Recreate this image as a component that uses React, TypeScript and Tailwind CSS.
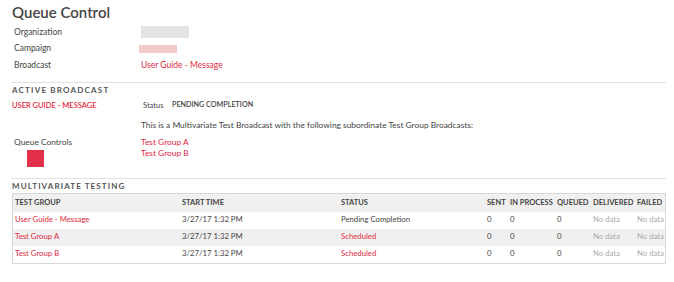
import React from "react";

const red = "text-[#e0283e]";

const cols = "grid grid-cols-[169px_159px_146px_23px_47px_36px_44px_28px]";

const rows = [
  { name: "User Guide - Message", status: "Pending Completion", statusRed: false },
  { name: "Test Group A", status: "Scheduled", statusRed: true },
  { name: "Test Group B", status: "Scheduled", statusRed: true },
];

export default function App() {
  return (
    <div className="w-[674px] h-[282px] bg-white font-['Lato',sans-serif] text-[#444]">
      <div className="ml-[12px] w-[654px] pt-[3px]">
        <h1 className="text-[15px] leading-[19px] font-semibold text-[#4a4446]">Queue Control</h1>
        <div className="pl-[2px] pt-[2px] text-[8.5px]">
          <div className="flex h-[16.5px] items-center">
            <div className="w-[127px]">Organization</div>
            <div className="w-[48px] h-[12px] bg-[#e4e4e4]" />
          </div>
          <div className="flex h-[16.5px] items-center">
            <div className="w-[125px]">Campaign</div>
            <div className="w-[38px] h-[8px] bg-[#f3c9cb]" />
          </div>
          <div className="flex h-[16.5px] items-center">
            <div className="w-[127px]">Broadcast</div>
            <div className={red}>User Guide - Message</div>
          </div>
        </div>
        <div className="mt-[8px] border-t border-[#e0e0e0]" />
        <div className="h-[14px] flex items-center text-[8px] font-bold tracking-[1.2px] text-[#555]">
          ACTIVE BROADCAST
        </div>
        <div className="flex h-[18px] items-center text-[7.5px]">
          <div className={`w-[131px] ${red} font-semibold`}>USER GUIDE - MESSAGE</div>
          <div className="text-[7.5px] w-[29px]">Status</div>
          <div className="font-semibold text-[7.2px]">PENDING COMPLETION</div>
        </div>
        <div className="flex h-[22px] items-center pl-[129px] text-[8.4px]">
          This is a Multivariate Test Broadcast with the following subordinate Test Group Broadcasts:
        </div>
        <div className="flex text-[8.4px]">
          <div className="w-[129px] pl-[2px]">
            <div className="h-[11px] leading-[11px]">Queue Controls</div>
            <div className="ml-[13px] mt-[2px] w-[17px] h-[17px] bg-[#e2304a]" />
          </div>
          <div className={red}>
            <div className="h-[11px] leading-[11px]">Test Group A</div>
            <div className="h-[10px] leading-[10px]">Test Group B</div>
          </div>
        </div>
        <div className="mt-[11px] border-t border-[#e0e0e0]" />
        <div className="h-[14px] flex items-center text-[8px] font-bold tracking-[1.1px] text-[#555]">
          MULTIVARIATE TESTING
        </div>
        <div className="border border-[#d8d8d8] text-[7.75px] whitespace-nowrap">
          <div className={`${cols} h-[18px] items-center bg-[#f0f0f0] font-bold text-[7.5px] text-[#444]`}>
            <div className="pl-[2px]">TEST GROUP</div>
            <div>START TIME</div>
            <div>STATUS</div>
            <div>SENT</div>
            <div>IN PROCESS</div>
            <div>QUEUED</div>
            <div>DELIVERED</div>
            <div>FAILED</div>
          </div>
          {rows.map((r, i) => (
            <div
              key={r.name}
              className={`${cols} h-[17px] items-center ${i === 1 ? "bg-[#f0f0f0]" : "bg-white"}`}
            >
              <div className={`pl-[2px] ${red}`}>{r.name}</div>
              <div>3/27/17 1:32 PM</div>
              <div className={r.statusRed ? red : ""}>{r.status}</div>
              <div>0</div>
              <div>0</div>
              <div>0</div>
              <div className="text-[#aaa]">No data</div>
              <div className="text-[#aaa]">No data</div>
            </div>
          ))}
        </div>
      </div>
    </div>
  );
}
